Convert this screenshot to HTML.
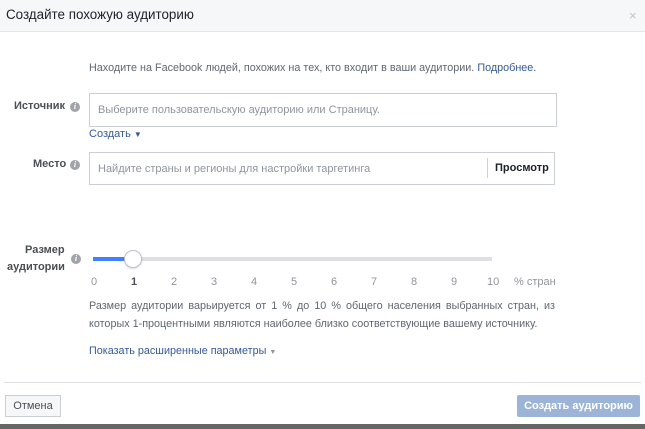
<!DOCTYPE html><html><head><meta charset="utf-8"><style>
*{margin:0;padding:0;box-sizing:border-box}
body{width:645px;height:429px;background:#fff;font-family:"Liberation Sans","Noto Sans CJK SC",sans-serif;position:relative;overflow:hidden;color:#4b4f56}
.a{position:absolute;white-space:nowrap}
.hdr{position:absolute;left:0;top:0;width:645px;height:32px;background:#f6f7f9;border-bottom:1px solid #e5e5e5}
.lbl{font-size:11px;font-weight:bold;color:#4b4f56}
.i{position:absolute;width:10px;height:10px;border-radius:50%;background:#a0a3a8;color:#fff;font-size:8px;font-style:italic;font-weight:bold;text-align:center;line-height:10px;font-family:"Liberation Serif",serif}
.inp{position:absolute;border:1px solid #ccd0d5;background:#fff;font-size:11px;color:#90949c}
.num{position:absolute;top:276px;font-size:11px;color:#90949c}
</style></head><body>
<div class="hdr"></div>
<div class="a" style="left:6px;top:7px;font-size:13.4px;color:#1d2129">Создайте похожую аудиторию</div>
<div class="a" style="left:629px;top:8px;font-size:13px;color:#bec2c9">×</div>
<div class="a" style="left:89px;top:62px;font-size:10.8px;color:#606770">Находите на Facebook людей, похожих на тех, кто входит в ваши аудитории. <span style="color:#365899">Подробнее.</span></div>
<div class="a lbl" style="left:14px;top:100px">Источник</div><div class="i" style="left:70px;top:102px">i</div>
<div class="inp" style="left:89px;top:93px;width:468px;height:34px;padding:10px 8px">Выберите пользовательскую аудиторию или Страницу.</div>
<div class="a" style="left:89px;top:128px;font-size:11px;color:#365899">Создать <span style="font-size:8px">▼</span></div>
<div class="a lbl" style="left:33px;top:158px">Место</div><div class="i" style="left:70px;top:160px">i</div>
<div class="inp" style="left:89px;top:152px;width:466px;height:33px;padding:10px 8px">Найдите страны и регионы для настройки таргетинга</div>
<div class="a" style="left:487px;top:158px;height:20px;border-left:1px solid #ccd0d5"></div>
<div class="a lbl" style="left:495px;top:162px;color:#1d2129">Просмотр</div>
<div class="a lbl" style="left:25px;top:244px">Размер</div>
<div class="a lbl" style="left:7px;top:261px">аудитории</div>
<div class="i" style="left:71px;top:254px">i</div>
<div class="a" style="left:93px;top:257px;width:399px;height:4px;background:#dddfe2"></div>
<div class="a" style="left:93px;top:257px;width:40px;height:4px;background:#4080ff"></div>
<div class="a" style="left:124px;top:250px;width:18px;height:18px;border-radius:50%;background:#fff;border:1px solid #bec2c9;box-shadow:0 1px 2px rgba(0,0,0,.15)"></div>
<div class="num" style="left:91px">0</div><div class="num" style="left:131px;font-weight:bold;color:#4b4f56">1</div>
<div class="num" style="left:171px">2</div><div class="num" style="left:211px">3</div><div class="num" style="left:251px">4</div>
<div class="num" style="left:291px">5</div><div class="num" style="left:331px">6</div><div class="num" style="left:371px">7</div>
<div class="num" style="left:411px">8</div><div class="num" style="left:451px">9</div><div class="num" style="left:487px">10</div>
<div class="num" style="left:514px">% стран</div>
<div class="a" style="left:89px;top:297px;width:466px;white-space:normal;text-align:justify;font-size:10.8px;line-height:18px;color:#606770;text-align-last:left">Размер аудитории варьируется от 1 % до 10 % общего населения выбранных стран, из которых 1-процентными являются наиболее близко соответствующие вашему источнику.</div>
<div class="a" style="left:89px;top:345px;font-size:10.8px;color:#365899">Показать расширенные параметры <span style="font-size:7px;color:#90949c">▼</span></div>
<div class="a" style="left:4px;top:382px;width:637px;border-top:1px solid #dddfe2"></div>
<div class="a" style="left:5px;top:395px;width:56px;height:22px;border:1px solid #ccd0d5;background:#f6f7f9;font-size:11px;color:#4b4f56;text-align:center;line-height:20px">Отмена</div>
<div class="a" style="left:517px;top:395px;width:123px;height:22px;background:#9cb4d8;border-radius:2px;color:#fff;font-size:11px;font-weight:bold;text-align:center;line-height:22px">Создать аудиторию</div>
<div class="a" style="left:0;top:424px;width:645px;height:5px;background:#666"></div>
</body></html>
